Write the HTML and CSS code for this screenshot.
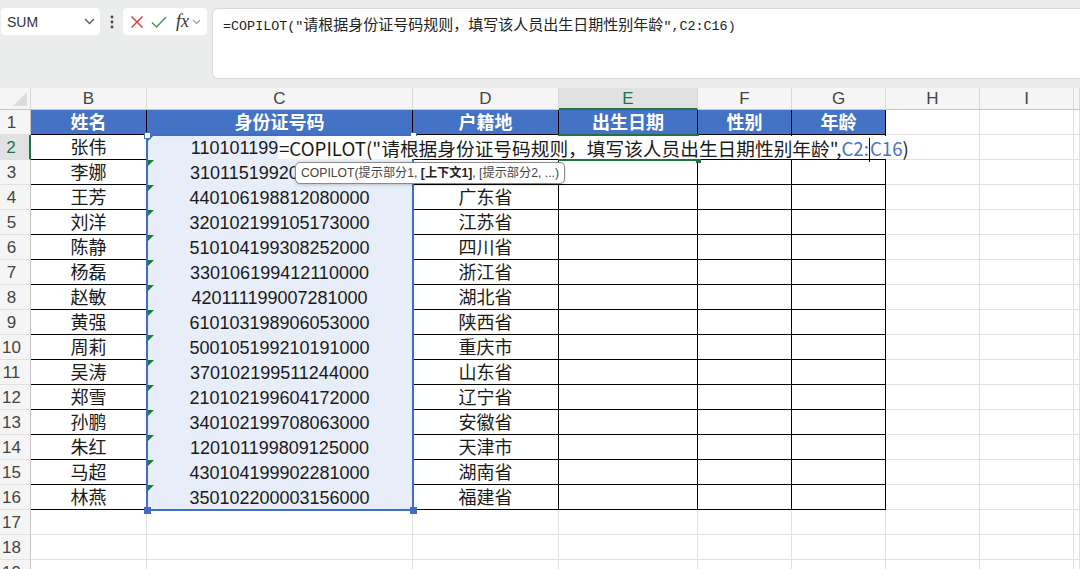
FILE: index.html
```html
<!DOCTYPE html>
<html>
  <head>
    <title>工作簿1 - Excel</title>
    <meta charset="utf-8">
    <link rel="stylesheet" href="styles.css">
  </head>
  <body>
    <div class="toolbar">
      <div class="namebox">
        <span>SUM</span>
        <svg width="11" height="7" viewBox="0 0 11 7"><path d="M1 1l4.5 4.5L10 1" fill="none" stroke="#555" stroke-width="1.3"/></svg>
      </div>
      <div class="dots">
        <svg width="4" height="14" viewBox="0 0 4 14"><circle cx="2" cy="2" r="1.4" fill="#444"/><circle cx="2" cy="7" r="1.4" fill="#444"/><circle cx="2" cy="12" r="1.4" fill="#444"/></svg>
      </div>
      <div class="fbtns">
        <svg width="14" height="14" viewBox="0 0 14 14"><path d="M1.5 1.5l11 11M12.5 1.5l-11 11" stroke="#d9423f" stroke-width="1.5"/></svg>
        <svg width="16" height="14" viewBox="0 0 16 14"><path d="M1 7.5l4.5 4.5L15 2" fill="none" stroke="#3f9b5c" stroke-width="1.5"/></svg>
        <span class="fx">fx</span>
        <svg width="9" height="6" viewBox="0 0 9 6"><path d="M1 1l3.5 3.5L8 1" fill="none" stroke="#999" stroke-width="1.1"/></svg>
      </div>
      <div class="fbar">
        <span class="mono">=COPILOT("</span><span class="han">请根据身份证号码规则，填写该人员出生日期性别年龄</span><span class="mono">",C2:C16)</span>
      </div>
    </div>

    <div class="sheet">
      <div class="grid" id="grid"></div>

      <!-- C2:C16 reference highlight -->
      <div class="sel"></div>
      <span class="hd tl"></span>
      <span class="hd tr"></span>
      <span class="hd bl"></span>
      <span class="hd br"></span>

      <!-- active cell E2 and its in-cell editor -->
      <div class="active"><span class="fill"></span></div>
      <div class="editor">=COPILOT("请根据身份证号码规则，填写该人员出生日期性别年龄",<span class="ref">C2:</span><i class="caret"></i><span class="ref">C16</span>)</div>
      <div class="tip">COPILOT(提示部分1, <b>[上下文1]</b>, [提示部分2, ...)</div>
    </div>

    <script>
      var letters = ["B", "C", "D", "E", "F", "G", "H", "I", ""];
      var head = ["姓名", "身份证号码", "户籍地", "出生日期", "性别", "年龄"];
      var people = [
        ["张伟", "110101199003074000", "北京市"],
        ["李娜", "310115199205120000", "上海市"],
        ["王芳", "440106198812080000", "广东省"],
        ["刘洋", "320102199105173000", "江苏省"],
        ["陈静", "510104199308252000", "四川省"],
        ["杨磊", "330106199412110000", "浙江省"],
        ["赵敏", "420111199007281000", "湖北省"],
        ["黄强", "610103198906053000", "陕西省"],
        ["周莉", "500105199210191000", "重庆市"],
        ["吴涛", "370102199511244000", "山东省"],
        ["郑雪", "210102199604172000", "辽宁省"],
        ["孙鹏", "340102199708063000", "安徽省"],
        ["朱红", "120101199809125000", "天津市"],
        ["马超", "430104199902281000", "湖南省"],
        ["林燕", "350102200003156000", "福建省"]
      ];

      var grid = document.getElementById("grid");
      function cell(cls, text) {
        var d = document.createElement("div");
        d.className = cls;
        d.textContent = text || "";
        grid.appendChild(d);
      }

      // column letters
      cell("corner");
      letters.forEach(function(l) {
        cell(l == "E" ? "ch on" : "ch", l);
      });

      for (var r = 1; r <= 19; r++) {
        cell(r == 2 ? "rh on" : "rh", r);
        for (var c = 0; c < letters.length; c++) {
          var cls = "c";
          var text = "";
          if (r <= 16 && c < 6) {
            cls += " t";
            if (r == 1) {
              cls += " th";
              text = head[c];
            } else {
              if (c < 3) text = people[r - 2][c];
              if (c == 1) cls += " sel-c";
            }
          }
          cell(cls, text);
        }
      }
    </script>
  </body>
</html>
```

FILE: styles.css
```css
* {
  box-sizing: border-box;
}
body {
  margin: 0;
  width: 1080px;
  height: 569px;
  overflow: hidden;
  background: #fff;
  font-family: "Liberation Sans", "Noto Sans CJK SC", sans-serif;
  color: #222;
}

/* name box + formula bar */
.toolbar {
  display: flex;
  align-items: flex-start;
  height: 88px;
  padding: 8px 0 0 1px;
  background: #ebedec;
}
.namebox {
  width: 99px;
  height: 27px;
  background: #fff;
  border-radius: 4px;
  display: flex;
  align-items: center;
  justify-content: space-between;
  padding: 0 5px 0 6px;
  font-size: 14px;
  color: #333;
}
.dots {
  width: 23px;
  height: 27px;
  display: flex;
  align-items: center;
  justify-content: center;
}
.fbtns {
  width: 84px;
  height: 27px;
  background: #fff;
  border-radius: 4px;
  display: flex;
  align-items: center;
  gap: 7px;
  padding-left: 7px;
}
.fx {
  font-family: "Liberation Serif", serif;
  font-style: italic;
  font-size: 18px;
  color: #333;
  margin-left: 2px;
  margin-right: -4px;
}
.fbar {
  flex: 1;
  height: 71px;
  margin-left: 5px;
  background: #fff;
  border: 1px solid #d9dbda;
  border-right: none;
  border-radius: 6px 0 0 6px;
  padding: 4px 0 0 10px;
  line-height: 22px;
  color: #222;
}
.mono {
  font-family: "Liberation Mono", monospace;
  font-size: 13.4px;
}
.han {
  font-family: "Noto Sans CJK SC", sans-serif;
  font-size: 15px;
}

/* sheet */
.sheet {
  position: relative;
}
.grid {
  display: grid;
  grid-template-columns: 31px 116px 266px 146px 139px 94px 94px 94px 94px 1fr;
  grid-template-rows: 22px repeat(19, 25px);
}
.grid > div {
  border-right: 1px solid #e1e1e1;
  border-bottom: 1px solid #e1e1e1;
  white-space: nowrap;
  overflow: hidden;
}
.corner {
  background: #f5f5f5;
  position: relative;
  border-bottom-color: #c6c6c6 !important;
  border-right-color: #d4d4d4 !important;
}
.corner::after {
  content: "";
  position: absolute;
  right: 3px;
  bottom: 3px;
  border-left: 14px solid transparent;
  border-bottom: 14px solid #dcdcdc;
}
.ch {
  background: #f5f5f5;
  border-bottom-color: #c6c6c6 !important;
  border-right-color: #d9d9d9 !important;
  text-align: center;
  font-size: 17px;
  line-height: 21px;
  color: #444;
}
.ch.on {
  background: #e1e1e1;
  color: #217346;
  border-bottom: 2px solid #217346 !important;
}
.rh {
  background: #f5f5f5;
  border-right-color: #c6c6c6 !important;
  font-size: 17px;
  line-height: 24px;
  padding: 1px 7px 0 0;
  text-align: center;
  color: #444;
}
.rh.on {
  background: #e1e1e1;
  color: #217346;
  border-right: 2px solid #217346 !important;
}
.c {
  text-align: center;
  font-size: 18px;
  line-height: 24px;
  padding-top: 1px;
  color: #1a1a1a;
}
.c.t {
  border-right-color: #000;
  border-bottom-color: #000;
}
.c.th {
  background: #4472c4;
  color: #fff;
  font-weight: bold;
}
.sel-c {
  position: relative;
  background: #e8eef9;
  border-bottom-color: #e8eef9 !important;
}
/* number-stored-as-text marker */
.sel-c::before {
  content: "";
  position: absolute;
  left: 0;
  top: 0;
  border-top: 7px solid #1d7a35;
  border-right: 7px solid transparent;
}

/* overlays */
.sel {
  position: absolute;
  left: 146px;
  top: 46px;
  width: 268px;
  height: 377px;
  border: 2px solid #3e6dc2;
}
.hd {
  position: absolute;
  width: 7px;
  height: 7px;
  border: 1px solid #3e6dc2;
  background: #fff;
}
.hd.tl { left: 144px; top: 44px; }
.hd.tr { left: 410px; top: 44px; }
.hd.bl { left: 144px; top: 419px; background: #3e6dc2; }
.hd.br { left: 410px; top: 419px; background: #3e6dc2; }

.active {
  position: absolute;
  left: 558px;
  top: 46px;
  width: 141px;
  height: 27px;
  border: 2px solid #217346;
}
.active .fill {
  position: absolute;
  right: -4px;
  bottom: -4px;
  width: 5px;
  height: 5px;
  background: #217346;
}
.editor {
  position: absolute;
  left: 278px;
  top: 48px;
  width: 634px;
  height: 23px;
  background: #fff;
  padding: 1px 0 0 1px;
  font-family: "Noto Sans CJK SC", sans-serif;
  font-size: 18.7px;
  line-height: 22px;
  white-space: nowrap;
  color: #1a1a1a;
}
.ref {
  color: #4a74c4;
}
.caret {
  display: inline-block;
  width: 1px;
  height: 24px;
  background: #000;
  vertical-align: -6px;
}
.tip {
  position: absolute;
  left: 295px;
  top: 74px;
  height: 22px;
  padding: 0 5px;
  background: #fff;
  border: 1px solid #8a8a8a;
  border-radius: 5px;
  box-shadow: 0 1px 3px rgba(0, 0, 0, 0.2);
  font-size: 12.2px;
  line-height: 20px;
  color: #444;
  white-space: nowrap;
}
.tip b {
  color: #222;
}
```
